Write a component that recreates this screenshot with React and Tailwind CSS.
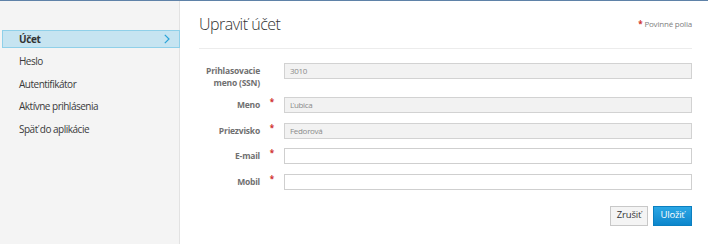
import React from "react";

const font = { fontFamily: '"Open Sans", "Noto Sans", sans-serif' };

function Row({ label, label2, required, value, disabled, first }) {
  return (
    <div className={`flex items-start ${first ? "" : "mt-[9.5px]"}`}>
      <div className="w-[61px] text-right text-[8.5px] leading-[12px] font-bold tracking-[-0.2px] text-[#707070] mt-[2px]">
        {label}
        {label2 && <div>{label2}</div>}
      </div>
      <div className="w-[24px] flex justify-center text-[8px] leading-[10px] text-[#d0312d] font-bold">
        {required ? "*" : ""}
      </div>
      <div
        className={`flex-1 h-[16px] border ${
          disabled ? "bg-[#f2f2f2] border-[#d2d2d2]" : "bg-white border-[#cfcfcf]"
        } flex items-center pl-[5px] text-[8px] tracking-[-0.3px] text-[#8a8a8a]`}
      >
        {value}
      </div>
    </div>
  );
}

export default function App() {
  const items = ["Heslo", "Autentifikátor", "Aktívne prihlásenia", "Späť do aplikácie"];
  return (
    <div className="w-[710px] h-[245px] bg-white overflow-hidden" style={font}>
      <div className="w-[708px] h-px bg-[#5f82a8]" />
      <div className="flex h-[244px]">
        <div className="w-[180px] shrink-0 bg-[#f4f4f4] border-r border-[#e2e2e2] pt-[27px] h-[243px]">
          <div className="h-[22.5px] flex items-center">
            <div className="ml-[2px] -mr-px flex-1 h-[18px] bg-[#c6e4f1] border border-[#8fd0e9] flex items-center pl-[16px] pr-[9px] text-[10px] tracking-[-0.4px] font-bold text-[#333]">
              <span className="flex-1">Účet</span>
              <svg width="6" height="10" viewBox="0 0 6 10">
                <polyline points="0.8,0.8 5,5 0.8,9.2" fill="none" stroke="#2aa3d8" strokeWidth="1.2" />
              </svg>
            </div>
          </div>
          {items.map((t) => (
            <div key={t} className="h-[22.5px] flex items-center pl-[19px] text-[10px] tracking-[-0.5px] text-[#3a3a3a]">
              {t}
            </div>
          ))}
        </div>
        <div className="flex-1 pl-[19px] pr-[18px]">
          <div className="h-[48px] border-b border-[#ececec] flex items-center justify-between pb-[1px]">
            <div className="text-[16px] font-light tracking-[-0.5px] text-[#333] leading-none">Upraviť účet</div>
            <div className="text-[8px] tracking-[-0.2px] text-[#808080] flex items-center gap-[2px]">
              <span className="text-[#d0312d] font-bold">*</span>
              <span>Povinné polia</span>
            </div>
          </div>
          <div className="pt-[14px]">
            <div className="mb-[8px]">
              <Row first label="Prihlasovacie" label2="meno (SSN)" value="3010" disabled />
            </div>
            <Row first label="Meno" required value="Ľubica" disabled />
            <Row label="Priezvisko" required value="Fedorová" disabled />
            <Row label="E-mail" required value="" />
            <Row label="Mobil" required value="" />
          </div>
          <div className="flex justify-end gap-[5px] mt-[16px]">
            <button className="h-[20px] w-[38px] border border-[#c8c8c8] bg-[#f4f4f4] text-[9.5px] tracking-[-0.2px] text-[#333] flex items-center justify-center">
              Zrušiť
            </button>
            <button className="h-[20px] w-[39px] border border-[#0b7fc0] bg-gradient-to-b from-[#2ba7e5] to-[#0b86cc] text-[9.5px] tracking-[-0.2px] text-white flex items-center justify-center">
              Uložiť
            </button>
          </div>
        </div>
      </div>
    </div>
  );
}
